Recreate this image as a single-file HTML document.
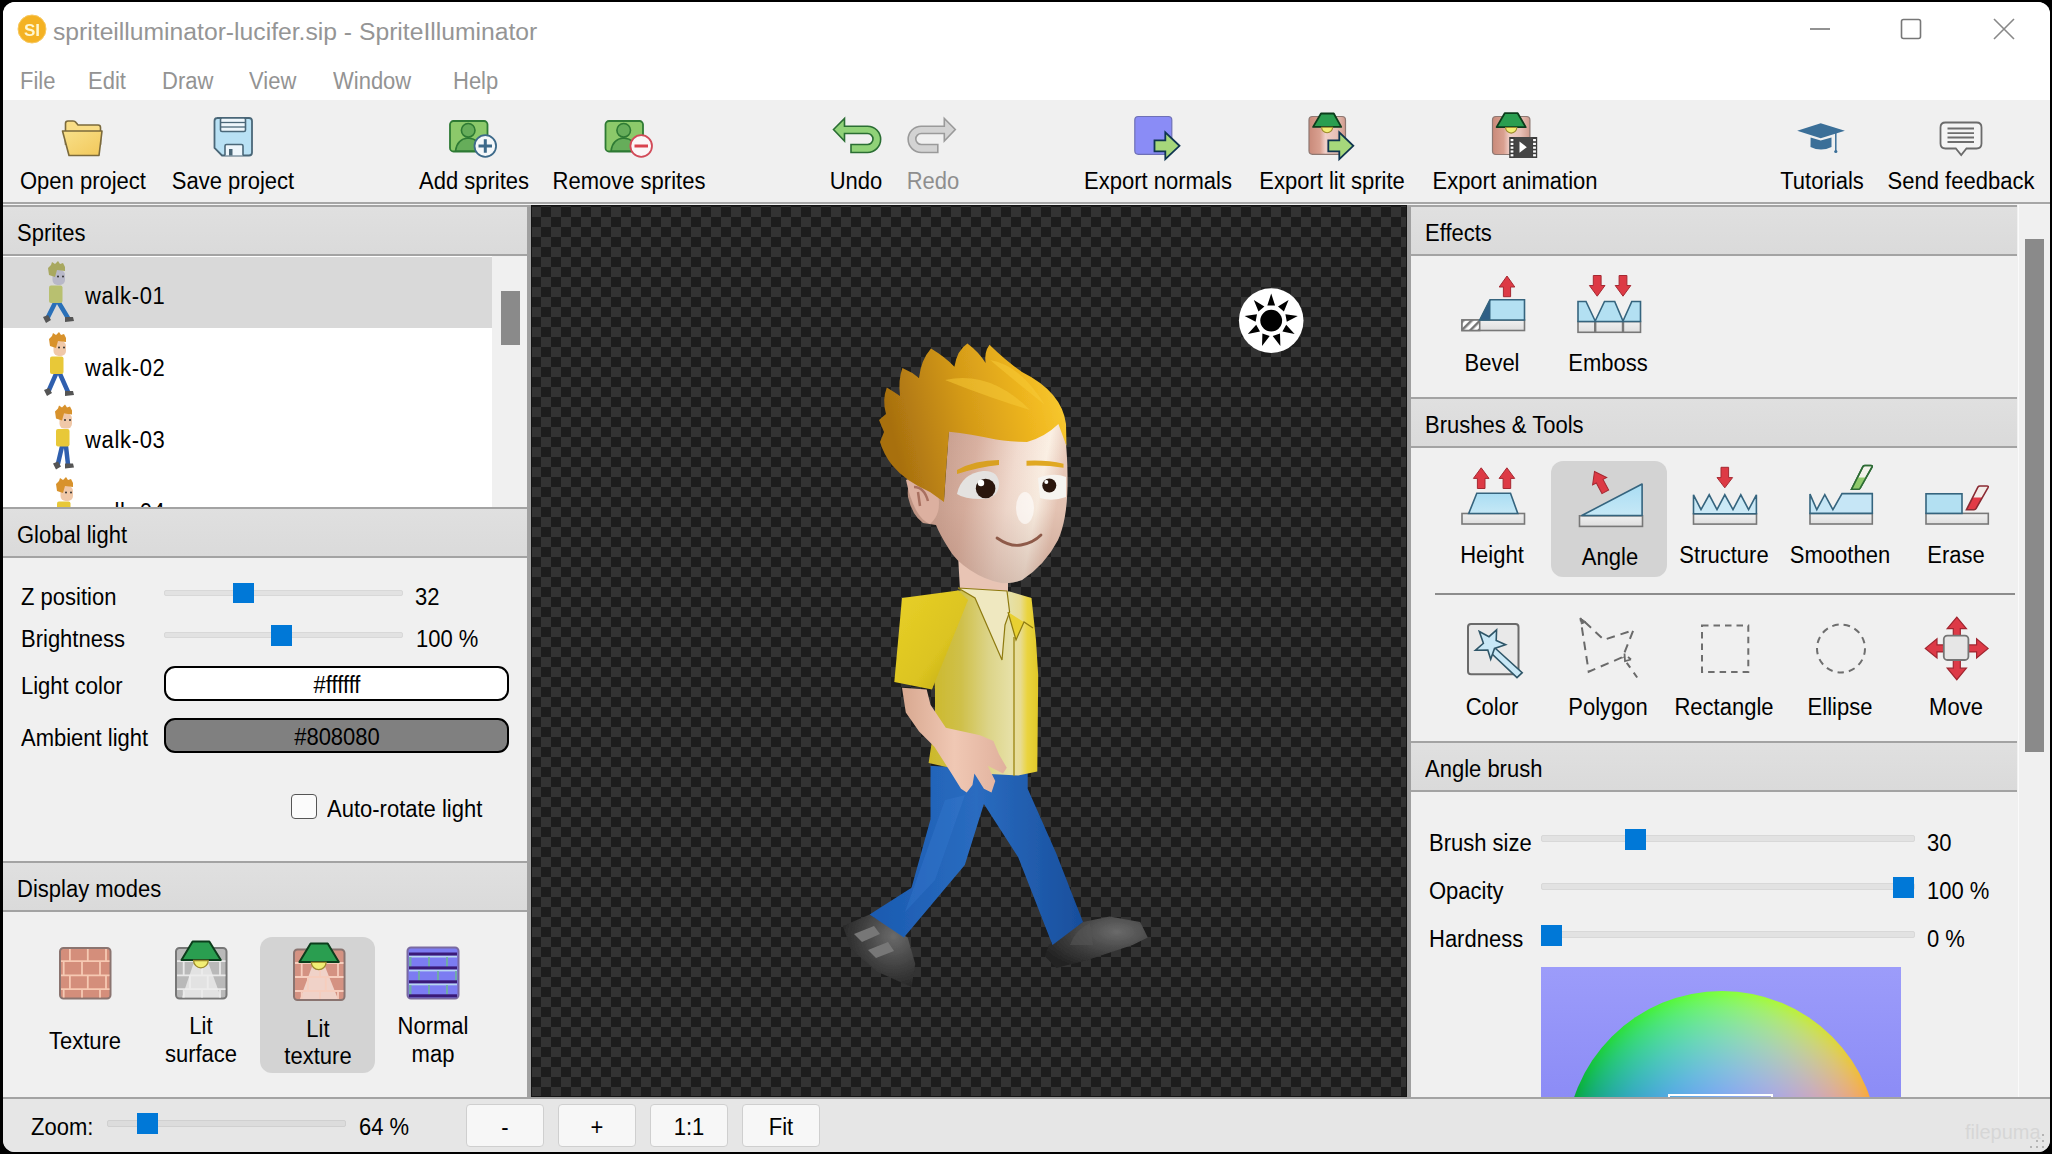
<!DOCTYPE html>
<html><head><meta charset="utf-8"><style>
html,body{margin:0;padding:0;}
body{width:2052px;height:1154px;overflow:hidden;background:#000;position:relative;font-family:'Liberation Sans',sans-serif;}
.t{position:absolute;white-space:nowrap;font-family:'Liberation Sans',sans-serif;}
.r{position:absolute;}
svg{position:absolute;}
</style></head><body>
<div class="r" style="left:3px;top:2px;width:2047px;height:1150px;background:#f0f0f0;border-radius:12px;overflow:hidden"><div class="r" style="left:0px;top:0px;width:2047px;height:98px;background:#ffffff"></div></div><div class="t" style="left:53px;top:20.09px;font-size:24.7px;line-height:24.7px;color:#959595;transform-origin:0 0;">spriteilluminator-lucifer.sip - SpriteIlluminator</div><div class="t" style="left:20px;top:69.53px;font-size:23.0px;line-height:23.0px;color:#939393;transform:scaleX(0.9565);transform-origin:0 0;">File</div><div class="t" style="left:88px;top:69.53px;font-size:23.0px;line-height:23.0px;color:#939393;transform:scaleX(0.9565);transform-origin:0 0;">Edit</div><div class="t" style="left:162px;top:69.53px;font-size:23.0px;line-height:23.0px;color:#939393;transform:scaleX(0.9565);transform-origin:0 0;">Draw</div><div class="t" style="left:249px;top:69.53px;font-size:23.0px;line-height:23.0px;color:#939393;transform:scaleX(0.9565);transform-origin:0 0;">View</div><div class="t" style="left:333px;top:69.53px;font-size:23.0px;line-height:23.0px;color:#939393;transform:scaleX(0.9565);transform-origin:0 0;">Window</div><div class="t" style="left:453px;top:69.53px;font-size:23.0px;line-height:23.0px;color:#939393;transform:scaleX(0.9565);transform-origin:0 0;">Help</div><div class="r" style="left:3px;top:101px;width:2047px;height:101px;background:#f0f0f0"></div><div class="r" style="left:3px;top:202px;width:2047px;height:2px;background:#a6a6a6"></div><div class="r" style="left:3px;top:204px;width:2047px;height:1px;background:#f4f4f4"></div><div class="t" style="left:-217px;width:600px;text-align:center;top:169.53px;font-size:23.0px;line-height:23.0px;color:#000;transform:scaleX(0.9565);transform-origin:50% 0;">Open project</div><div class="t" style="left:-67px;width:600px;text-align:center;top:169.53px;font-size:23.0px;line-height:23.0px;color:#000;transform:scaleX(0.9565);transform-origin:50% 0;">Save project</div><div class="t" style="left:174px;width:600px;text-align:center;top:169.53px;font-size:23.0px;line-height:23.0px;color:#000;transform:scaleX(0.9565);transform-origin:50% 0;">Add sprites</div><div class="t" style="left:329px;width:600px;text-align:center;top:169.53px;font-size:23.0px;line-height:23.0px;color:#000;transform:scaleX(0.9565);transform-origin:50% 0;">Remove sprites</div><div class="t" style="left:556px;width:600px;text-align:center;top:169.53px;font-size:23.0px;line-height:23.0px;color:#000;transform:scaleX(0.9565);transform-origin:50% 0;">Undo</div><div class="t" style="left:633px;width:600px;text-align:center;top:169.53px;font-size:23.0px;line-height:23.0px;color:#8e8e8e;transform:scaleX(0.9565);transform-origin:50% 0;">Redo</div><div class="t" style="left:858px;width:600px;text-align:center;top:169.53px;font-size:23.0px;line-height:23.0px;color:#000;transform:scaleX(0.9565);transform-origin:50% 0;">Export normals</div><div class="t" style="left:1032px;width:600px;text-align:center;top:169.53px;font-size:23.0px;line-height:23.0px;color:#000;transform:scaleX(0.9565);transform-origin:50% 0;">Export lit sprite</div><div class="t" style="left:1215px;width:600px;text-align:center;top:169.53px;font-size:23.0px;line-height:23.0px;color:#000;transform:scaleX(0.9565);transform-origin:50% 0;">Export animation</div><div class="t" style="left:1522px;width:600px;text-align:center;top:169.53px;font-size:23.0px;line-height:23.0px;color:#000;transform:scaleX(0.9565);transform-origin:50% 0;">Tutorials</div><div class="t" style="left:1661px;width:600px;text-align:center;top:169.53px;font-size:23.0px;line-height:23.0px;color:#000;transform:scaleX(0.9565);transform-origin:50% 0;">Send feedback</div><div class="r" style="left:3px;top:205px;width:524px;height:892px;background:#f0f0f0"></div><div class="r" style="left:3px;top:205px;width:524px;height:50px;background:linear-gradient(#e0e0e0,#dadada)"></div><div class="r" style="left:3px;top:205px;width:524px;height:2px;background:#a3a3a3"></div><div class="r" style="left:3px;top:254px;width:524px;height:2px;background:#a3a3a3"></div><div class="t" style="left:17px;top:221.53px;font-size:23.0px;line-height:23.0px;color:#000;transform:scaleX(0.9565);transform-origin:0 0;">Sprites</div><div class="r" style="left:3px;top:256px;width:524px;height:251px;background:#ffffff"></div><div class="r" style="left:3px;top:257px;width:489px;height:71px;background:#d9d9d9"></div><div class="r" style="left:492px;top:256px;width:35px;height:251px;background:#f0f0f0"></div><div class="r" style="left:501px;top:291px;width:19px;height:54px;background:#8a8a8a"></div><div class="r" style="left:3px;top:256px;width:489px;height:251px;overflow:hidden"><div class="t" style="left:82px;top:28.53px;font-size:23.0px;line-height:23.0px;color:#000;transform:scaleX(0.9565);transform-origin:0 0;letter-spacing:0.7px">walk-01</div><div class="t" style="left:82px;top:100.53px;font-size:23.0px;line-height:23.0px;color:#000;transform:scaleX(0.9565);transform-origin:0 0;letter-spacing:0.7px">walk-02</div><div class="t" style="left:82px;top:172.53px;font-size:23.0px;line-height:23.0px;color:#000;transform:scaleX(0.9565);transform-origin:0 0;letter-spacing:0.7px">walk-03</div><div class="t" style="left:82px;top:244.53px;font-size:23.0px;line-height:23.0px;color:#000;transform:scaleX(0.9565);transform-origin:0 0;letter-spacing:0.7px">walk-04</div></div><div class="r" style="left:3px;top:507px;width:524px;height:50px;background:linear-gradient(#e0e0e0,#dadada)"></div><div class="r" style="left:3px;top:507px;width:524px;height:2px;background:#a3a3a3"></div><div class="r" style="left:3px;top:556px;width:524px;height:2px;background:#a3a3a3"></div><div class="t" style="left:17px;top:523.53px;font-size:23.0px;line-height:23.0px;color:#000;transform:scaleX(0.9565);transform-origin:0 0;">Global light</div><div class="t" style="left:21px;top:585.53px;font-size:23.0px;line-height:23.0px;color:#000;transform:scaleX(0.9565);transform-origin:0 0;">Z position</div><div class="t" style="left:21px;top:627.53px;font-size:23.0px;line-height:23.0px;color:#000;transform:scaleX(0.9565);transform-origin:0 0;">Brightness</div><div class="t" style="left:21px;top:674.53px;font-size:23.0px;line-height:23.0px;color:#000;transform:scaleX(0.9565);transform-origin:0 0;">Light color</div><div class="t" style="left:21px;top:726.53px;font-size:23.0px;line-height:23.0px;color:#000;transform:scaleX(0.9565);transform-origin:0 0;">Ambient light</div><div class="r" style="left:164px;top:590px;width:239px;height:6px;background:#e2e2e2;border:1px solid #d8d8d8;box-sizing:border-box;border-radius:2px"></div><div class="r" style="left:233px;top:583px;width:21px;height:20px;background:#0078d7"></div><div class="t" style="left:415px;top:585.53px;font-size:23.0px;line-height:23.0px;color:#000;transform:scaleX(0.9565);transform-origin:0 0;">32</div><div class="r" style="left:164px;top:632px;width:239px;height:6px;background:#e2e2e2;border:1px solid #d8d8d8;box-sizing:border-box;border-radius:2px"></div><div class="r" style="left:271px;top:625px;width:21px;height:21px;background:#0078d7"></div><div class="t" style="left:416px;top:627.53px;font-size:23.0px;line-height:23.0px;color:#000;transform:scaleX(0.9565);transform-origin:0 0;">100 %</div><div class="r" style="left:164px;top:666px;width:345px;height:35px;background:#ffffff;border:2px solid #000;box-sizing:border-box;border-radius:11px"></div><div class="t" style="left:37px;width:600px;text-align:center;top:673.53px;font-size:23.0px;line-height:23.0px;color:#000;transform:scaleX(0.9565);transform-origin:50% 0;">#ffffff</div><div class="r" style="left:164px;top:718px;width:345px;height:35px;background:#808080;border:2px solid #000;box-sizing:border-box;border-radius:11px"></div><div class="t" style="left:37px;width:600px;text-align:center;top:725.53px;font-size:23.0px;line-height:23.0px;color:#000;transform:scaleX(0.9565);transform-origin:50% 0;">#808080</div><div class="r" style="left:291px;top:794px;width:26px;height:25px;background:#fbfbfb;border:1.5px solid #555;box-sizing:border-box;border-radius:4px"></div><div class="t" style="left:327px;top:797.53px;font-size:23.0px;line-height:23.0px;color:#000;transform:scaleX(0.9565);transform-origin:0 0;">Auto-rotate light</div><div class="r" style="left:3px;top:861px;width:524px;height:50px;background:linear-gradient(#e0e0e0,#dadada)"></div><div class="r" style="left:3px;top:861px;width:524px;height:2px;background:#a3a3a3"></div><div class="r" style="left:3px;top:910px;width:524px;height:2px;background:#a3a3a3"></div><div class="t" style="left:17px;top:877.53px;font-size:23.0px;line-height:23.0px;color:#000;transform:scaleX(0.9565);transform-origin:0 0;">Display modes</div><div class="r" style="left:260px;top:937px;width:115px;height:136px;background:#d3d3d3;border-radius:12px"></div><div class="t" style="left:-215px;width:600px;text-align:center;top:1029.53px;font-size:23.0px;line-height:23.0px;color:#000;transform:scaleX(0.9565);transform-origin:50% 0;">Texture</div><div class="t" style="left:-99px;width:600px;text-align:center;top:1014.53px;font-size:23.0px;line-height:23.0px;color:#000;transform:scaleX(0.9565);transform-origin:50% 0;">Lit</div><div class="t" style="left:-99px;width:600px;text-align:center;top:1042.53px;font-size:23.0px;line-height:23.0px;color:#000;transform:scaleX(0.9565);transform-origin:50% 0;">surface</div><div class="t" style="left:18px;width:600px;text-align:center;top:1017.53px;font-size:23.0px;line-height:23.0px;color:#000;transform:scaleX(0.9565);transform-origin:50% 0;">Lit</div><div class="t" style="left:18px;width:600px;text-align:center;top:1044.53px;font-size:23.0px;line-height:23.0px;color:#000;transform:scaleX(0.9565);transform-origin:50% 0;">texture</div><div class="t" style="left:133px;width:600px;text-align:center;top:1014.53px;font-size:23.0px;line-height:23.0px;color:#000;transform:scaleX(0.9565);transform-origin:50% 0;">Normal</div><div class="t" style="left:133px;width:600px;text-align:center;top:1042.53px;font-size:23.0px;line-height:23.0px;color:#000;transform:scaleX(0.9565);transform-origin:50% 0;">map</div><div class="r" style="left:527px;top:205px;width:4px;height:892px;background:#a0a0a0"></div><div class="r" style="left:1407px;top:205px;width:4px;height:892px;background:#a0a0a0"></div><div class="r" style="left:531px;top:205px;width:876px;height:892px;background-color:#232323;background-image:conic-gradient(#333333 25%, #1d1d1d 25% 50%, #333333 50% 75%, #1d1d1d 75%);background-size:20px 20px;background-position:0 12px;box-shadow:inset 0 0 0 1px #141414"></div><svg width="2052" height="1154" viewBox="0 0 2052 1154" style="left:0;top:0">
<defs>
<linearGradient id="hairG" x1="0" y1="0" x2="1" y2="0.4"><stop offset="0" stop-color="#c98a10"/><stop offset="0.35" stop-color="#e0a818"/><stop offset="0.7" stop-color="#f2c020"/><stop offset="1" stop-color="#f7d040"/></linearGradient>
<linearGradient id="skinG" x1="0" y1="0" x2="1" y2="0"><stop offset="0" stop-color="#c89a88"/><stop offset="0.35" stop-color="#e6c0b0"/><stop offset="0.75" stop-color="#f6e2d8"/><stop offset="1" stop-color="#e0b8a8"/></linearGradient>
<linearGradient id="skinV" x1="0" y1="0" x2="0" y2="1"><stop offset="0" stop-color="#f4dccc"/><stop offset="1" stop-color="#d6a898"/></linearGradient>
<linearGradient id="shirtG" x1="0" y1="0" x2="1" y2="0"><stop offset="0" stop-color="#d8c028"/><stop offset="0.2" stop-color="#e6d040"/><stop offset="0.55" stop-color="#e8e0a0"/><stop offset="0.85" stop-color="#efe8b0"/><stop offset="1" stop-color="#e8d040"/></linearGradient>
<linearGradient id="sleeveG" x1="0" y1="0" x2="1" y2="1"><stop offset="0" stop-color="#f0d830"/><stop offset="1" stop-color="#c8b020"/></linearGradient>
<linearGradient id="pantsG" x1="0" y1="0" x2="1" y2="0"><stop offset="0" stop-color="#1c58a8"/><stop offset="0.5" stop-color="#2c6cc0"/><stop offset="1" stop-color="#1a4c98"/></linearGradient>
<linearGradient id="shoeG" x1="0" y1="0" x2="1" y2="0"><stop offset="0" stop-color="#2a2a2a"/><stop offset="0.6" stop-color="#484848"/><stop offset="1" stop-color="#6a6a6a"/></linearGradient>
</defs>
<defs><filter id="soft" x="-5%" y="-5%" width="110%" height="110%"><feGaussianBlur stdDeviation="0.7"/></filter><linearGradient id="faceG" x1="0" y1="0" x2="1" y2="0.2"><stop offset="0" stop-color="#b58a7a"/><stop offset="0.45" stop-color="#d8b0a0"/><stop offset="0.7" stop-color="#f2dcd0"/><stop offset="0.88" stop-color="#fbf0e4"/><stop offset="1" stop-color="#e8c8b8"/></linearGradient><linearGradient id="hairG2" x1="0" y1="0.2" x2="1" y2="0"><stop offset="0" stop-color="#a87010"/><stop offset="0.4" stop-color="#d49a18"/><stop offset="0.75" stop-color="#f0b820"/><stop offset="1" stop-color="#fad038"/></linearGradient><linearGradient id="bodyG" x1="0" y1="0" x2="1" y2="0"><stop offset="0" stop-color="#ccb828"/><stop offset="0.3" stop-color="#cfc04a"/><stop offset="0.55" stop-color="#dcd488"/><stop offset="0.75" stop-color="#e6e0a6"/><stop offset="0.84" stop-color="#e8dc90"/><stop offset="0.9" stop-color="#ead440"/><stop offset="1" stop-color="#e0c828"/></linearGradient><linearGradient id="slvG" x1="0" y1="0" x2="1" y2="1"><stop offset="0" stop-color="#e8d028"/><stop offset="0.6" stop-color="#dcc420"/><stop offset="1" stop-color="#b8a418"/></linearGradient><linearGradient id="armG" x1="0" y1="0" x2="1" y2="0"><stop offset="0" stop-color="#d8a890"/><stop offset="0.5" stop-color="#f0c8b4"/><stop offset="1" stop-color="#e0b09c"/></linearGradient><linearGradient id="pantG2" x1="0" y1="0" x2="1" y2="0"><stop offset="0" stop-color="#1a5ab0"/><stop offset="0.5" stop-color="#2a6cc0"/><stop offset="1" stop-color="#184e9c"/></linearGradient><linearGradient id="faceShade" x1="0" y1="0" x2="0" y2="1"><stop offset="0" stop-color="#fff" stop-opacity="0"/><stop offset="0.55" stop-color="#8a5a48" stop-opacity="0.05"/><stop offset="1" stop-color="#8a5a48" stop-opacity="0.3"/></linearGradient><radialGradient id="shoeR" cx="0.7" cy="0.3" r="0.8"><stop offset="0" stop-color="#6a6a6a"/><stop offset="0.6" stop-color="#3c3c3c"/><stop offset="1" stop-color="#222"/></radialGradient></defs>
<g filter="url(#soft)">
<path d="M842.9 925.9 L869.6 914.5 L907.7 937.4 L915.3 964.0 L911.5 987.0 L877.2 971.7 L850.5 948.8 Z" fill="url(#shoeR)"/>
<path d="M1048.7 945.0 L1083.0 922.1 L1109.7 916.4 L1140.2 922.1 L1147.8 937.4 L1132.6 945.0 L1086.8 960.2 L1056.3 967.9 L1044.9 956.4 Z" fill="url(#shoeR)"/>
<path d="M854 934 L874 926 L880 934 L862 942 Z M868 950 L888 942 L894 951 L876 958 Z" fill="#777"/>
<path d="M1070 945 q5-15 20-22 l3 22 Z" fill="#555" opacity="0.6"/>
<path d="M930.5 765.8 L1027.7 772.0 L1027.7 788.7 L1056.3 853.5 L1083.0 922.1 L1052.5 945.0 L1018.2 857.3 L983.9 804.0 L964.8 865.0 L903.9 937.4 L869.6 914.5 L911.5 887.8 L930.5 819.2 Z" fill="url(#pantG2)"/>
<path d="M945 800 L965 795 L935 880 L905 912 Z" fill="#3a7cd0" opacity="0.35"/>
<path d="M958.0 555.0 L960.0 590.0 L979.7 598.3 L1006.7 611.8 L1008.0 591.5 L1008.0 575.0 L1030.0 570.0 Z" fill="#e8c4b4"/>
<path d="M928.0 600.0 L958.1 590.5 L1009.6 591.4 L1031.5 598.0 L1036.0 640.0 L1038.2 675.3 L1037.3 771.5 L1018.2 775.4 L990.0 774.0 L960.0 770.0 L928.6 763.0 L935.0 720.0 L935.0 689.6 Z" fill="url(#bodyG)"/>
<path d="M958.1 588.0 L975.0 598.0 L1002.0 660.0 L1005.0 625.0 L1009.6 612.0 L1007.0 591.0 Z" fill="#efe8c0" stroke="#8e7a10" stroke-width="1.2"/>
<path d="M1008 612 L1016 640 L1024 622 L1033 628" fill="#e8d030" stroke="#8e7a10" stroke-width="1.2"/>
<path d="M1014 637 V776" stroke="#9a8410" stroke-width="1.3"/>
<path d="M902.0 598.0 L958.1 590.5 L968.0 600.0 L948.0 650.0 L932.0 689.6 L894.3 682.0 Z" fill="url(#slvG)"/>
<path d="M902.0 687.7 L905.8 712.5 L919.1 731.5 L934.4 746.8 L951.5 773.5 L961.0 788.7 L966.7 792.5 L972.5 785.0 L974.4 773.5 L983.9 788.7 L991.5 792.5 L995.3 781.0 L987.7 765.8 L1003.0 773.5 L1006.8 767.7 L999.1 754.4 L993.4 741.0 L980.1 735.3 L945.8 727.7 L930.5 704.8 L926.7 689.6 Z" fill="url(#armG)"/>
<path d="M949 428 L1062 418 Q1068 445 1067.5 486 Q1067 520 1058 540 Q1045 565 1022 580 Q1010 584 1001 583 Q985 580 970 570 Q955 560 949 549 Q940 535 936 525 L923 523 Q912 515 908 497 Q906 480 918 477 Q930 478 944 500 Z" fill="url(#faceG)"/><path d="M949 428 L1062 418 Q1068 445 1067.5 486 Q1067 520 1058 540 Q1045 565 1022 580 Q1010 584 1001 583 Q985 580 970 570 Q955 560 949 549 Q940 535 936 525 L923 523 Q912 515 908 497 Q906 480 918 477 Q930 478 944 500 Z" fill="url(#faceShade)"/>
<path d="M906 480 q16 -8 32 14 q4 20 -8 30 q-16 -6 -24 -44 Z" fill="#dcb0a0"/><path d="M914 487 q10 0 14 14 M918 492 l2 14" stroke="#a87060" stroke-width="2.5" fill="none"/>
<path d="M944 502 L930 492 Q905 481 892 465 Q884 455 880 442 L884 432 L879 420 L886 414 Q882 400 886.8 387.6 Q894 392 900 396 Q898 380 902.4 368 Q912 372 919 378 Q921 360 931 348.6 Q945 357 954.4 366.8 Q957 350 967.4 343.4 Q979 352 985.6 363 Q984 352 989.5 344.7 Q1005 360 1022 372 Q1042 382 1053 395 Q1064 408 1066 424 L1066.5 446 L1058.4 424 Q1045 437 1027 442 Q1010 442 996 439.6 Q970 434 949 431.8 L946 470 Z" fill="url(#hairG2)"/>
<path d="M945 380 q45 -10 85 30 q-40 -12 -85 -30 Z M990 360 q30 5 55 45 q-25 -20 -55 -45 Z" fill="#f8cc38" opacity="0.5"/>
<path d="M957 470 q18 -10 42 -10 l0 5 q-20 2 -42 9 Z" fill="#d8a020"/>
<path d="M1026.5 460.7 q20 -1 37 3 l0 4 q-18 -3 -37 -2 Z" fill="#e0a820"/>
<path d="M957 494 q4 -20 26 -23 q16 -1 16 14 q-1 14 -18 14 q-17 0 -24 -5 Z" fill="#e4e2e0"/>
<circle cx="985.6" cy="488.5" r="9.8" fill="#2a1810"/><circle cx="981" cy="483" r="3.2" fill="#fff"/>
<path d="M1038 478 q16 -6 28 -1 l0 20 q-14 5 -26 1 Z" fill="#f6f4f0"/>
<circle cx="1049.3" cy="485.5" r="7" fill="#2a1810"/><circle cx="1046.3" cy="482" r="2" fill="#fff"/>
<ellipse cx="1025" cy="508" rx="9" ry="16" fill="#ffffff" opacity="0.6"/>
<path d="M997 538 q13 9 24 7 q12 -2 20 -10" stroke="#8e5a48" stroke-width="2.8" fill="none" stroke-linecap="round"/>
</g>
<circle cx="1271.2" cy="320.6" r="32.3" fill="#fff"/>
<circle cx="1271.2" cy="320.6" r="10.9" fill="#000"/>
<path d="M1271.2 293.6 L1275.1 305.5 L1267.3 305.5 Z M1288.6 299.9 L1283.9 311.5 L1278.0 306.5 Z M1297.8 315.9 L1286.8 321.8 L1285.4 314.2 Z M1294.6 334.1 L1282.4 331.5 L1286.2 324.8 Z M1280.4 346.0 L1272.7 336.1 L1280.0 333.5 Z M1262.0 346.0 L1262.4 333.5 L1269.7 336.1 Z M1247.8 334.1 L1256.2 324.8 L1260.0 331.5 Z M1244.6 315.9 L1257.0 314.2 L1255.6 321.8 Z M1253.8 299.9 L1264.4 306.5 L1258.5 311.5 Z" fill="#000"/>
<svg x="3" y="256" width="489" height="251" viewBox="3 256 489 251" overflow="hidden">
<g transform="translate(45,262)"><path d="M10 41 L3 55 M14 41 L23 56" stroke="#2a70b8" stroke-width="4.5" fill="none" stroke-linecap="round"/><path d="M-2 55 l5 -2 l3 5 l-5 3 Z M20 55 h8 l1 4 l-9 1 Z" fill="#555"/><rect x="4" y="23.5" width="13.5" height="17.5" rx="2" fill="#b8c070"/><rect x="7.5" y="8" width="12.5" height="15" rx="5" fill="#b8b8c8"/><path d="M4 13 L3 6 L6 3 L7 0 L10 2 L13 -1 L15 2 L18 1 L20 5 L20 9 L12 8 L10 15 Z" fill="#a8a860"/><circle cx="13" cy="14.5" r="1" fill="#333"/><circle cx="18" cy="14.5" r="1" fill="#333"/></g>
<g transform="translate(46,333)"><path d="M10 41 L3 57 M14 41 L22 59" stroke="#2f5fae" stroke-width="4.5" fill="none" stroke-linecap="round"/><path d="M-2 57 l5 -2 l3 5 l-5 3 Z M19 58 h8 l1 4 l-9 1 Z" fill="#555"/><rect x="4" y="23.5" width="13.5" height="17.5" rx="2" fill="#e8c838"/><rect x="7.5" y="8" width="12.5" height="15" rx="5" fill="#f0c8a8"/><path d="M4 13 L3 6 L6 3 L7 0 L10 2 L13 -1 L15 2 L18 1 L20 5 L20 9 L12 8 L10 15 Z" fill="#d8922c"/><circle cx="13" cy="14.5" r="1" fill="#333"/><circle cx="18" cy="14.5" r="1" fill="#333"/></g>
<g transform="translate(52,405.6)"><path d="M10 41 L6 58 M14 41 L16 59" stroke="#2f5fae" stroke-width="4.5" fill="none" stroke-linecap="round"/><path d="M1 58 l5 -2 l3 5 l-5 3 Z M13 58 h8 l1 4 l-9 1 Z" fill="#555"/><rect x="4" y="23.5" width="13.5" height="17.5" rx="2" fill="#e8c838"/><rect x="7.5" y="8" width="12.5" height="15" rx="5" fill="#f0c8a8"/><path d="M4 13 L3 6 L6 3 L7 0 L10 2 L13 -1 L15 2 L18 1 L20 5 L20 9 L12 8 L10 15 Z" fill="#d8922c"/><circle cx="13" cy="14.5" r="1" fill="#333"/><circle cx="18" cy="14.5" r="1" fill="#333"/></g>
<g transform="translate(53,478)"><path d="M10 41 L6 58 M14 41 L16 59" stroke="#2f5fae" stroke-width="4.5" fill="none" stroke-linecap="round"/><path d="M1 58 l5 -2 l3 5 l-5 3 Z M13 58 h8 l1 4 l-9 1 Z" fill="#555"/><rect x="4" y="23.5" width="13.5" height="17.5" rx="2" fill="#e8c838"/><rect x="7.5" y="8" width="12.5" height="15" rx="5" fill="#f0c8a8"/><path d="M4 13 L3 6 L6 3 L7 0 L10 2 L13 -1 L15 2 L18 1 L20 5 L20 9 L12 8 L10 15 Z" fill="#d8922c"/><circle cx="13" cy="14.5" r="1" fill="#333"/><circle cx="18" cy="14.5" r="1" fill="#333"/></g>
</svg><div class="r" style="left:1411px;top:205px;width:639px;height:892px;background:#f0f0f0"></div><div class="r" style="left:1411px;top:205px;width:606px;height:50px;background:linear-gradient(#e0e0e0,#dadada)"></div><div class="r" style="left:1411px;top:205px;width:606px;height:2px;background:#a3a3a3"></div><div class="r" style="left:1411px;top:254px;width:606px;height:2px;background:#a3a3a3"></div><div class="t" style="left:1425px;top:221.53px;font-size:23.0px;line-height:23.0px;color:#000;transform:scaleX(0.9565);transform-origin:0 0;">Effects</div><div class="t" style="left:1192px;width:600px;text-align:center;top:351.53px;font-size:23.0px;line-height:23.0px;color:#000;transform:scaleX(0.9565);transform-origin:50% 0;">Bevel</div><div class="t" style="left:1308px;width:600px;text-align:center;top:351.53px;font-size:23.0px;line-height:23.0px;color:#000;transform:scaleX(0.9565);transform-origin:50% 0;">Emboss</div><div class="r" style="left:1411px;top:397px;width:606px;height:50px;background:linear-gradient(#e0e0e0,#dadada)"></div><div class="r" style="left:1411px;top:397px;width:606px;height:2px;background:#a3a3a3"></div><div class="r" style="left:1411px;top:446px;width:606px;height:2px;background:#a3a3a3"></div><div class="t" style="left:1425px;top:413.53px;font-size:23.0px;line-height:23.0px;color:#000;transform:scaleX(0.9565);transform-origin:0 0;">Brushes &amp; Tools</div><div class="r" style="left:1551px;top:461px;width:116px;height:116px;background:#d3d3d3;border-radius:12px"></div><div class="t" style="left:1192px;width:600px;text-align:center;top:543.53px;font-size:23.0px;line-height:23.0px;color:#000;transform:scaleX(0.9565);transform-origin:50% 0;">Height</div><div class="t" style="left:1310px;width:600px;text-align:center;top:545.53px;font-size:23.0px;line-height:23.0px;color:#000;transform:scaleX(0.9565);transform-origin:50% 0;">Angle</div><div class="t" style="left:1424px;width:600px;text-align:center;top:543.53px;font-size:23.0px;line-height:23.0px;color:#000;transform:scaleX(0.9565);transform-origin:50% 0;">Structure</div><div class="t" style="left:1540px;width:600px;text-align:center;top:543.53px;font-size:23.0px;line-height:23.0px;color:#000;transform:scaleX(0.9565);transform-origin:50% 0;">Smoothen</div><div class="t" style="left:1656px;width:600px;text-align:center;top:543.53px;font-size:23.0px;line-height:23.0px;color:#000;transform:scaleX(0.9565);transform-origin:50% 0;">Erase</div><div class="r" style="left:1435px;top:593px;width:580px;height:2px;background:#8c8c8c"></div><div class="t" style="left:1192px;width:600px;text-align:center;top:695.53px;font-size:23.0px;line-height:23.0px;color:#000;transform:scaleX(0.9565);transform-origin:50% 0;">Color</div><div class="t" style="left:1308px;width:600px;text-align:center;top:695.53px;font-size:23.0px;line-height:23.0px;color:#000;transform:scaleX(0.9565);transform-origin:50% 0;">Polygon</div><div class="t" style="left:1424px;width:600px;text-align:center;top:695.53px;font-size:23.0px;line-height:23.0px;color:#000;transform:scaleX(0.9565);transform-origin:50% 0;">Rectangle</div><div class="t" style="left:1540px;width:600px;text-align:center;top:695.53px;font-size:23.0px;line-height:23.0px;color:#000;transform:scaleX(0.9565);transform-origin:50% 0;">Ellipse</div><div class="t" style="left:1656px;width:600px;text-align:center;top:695.53px;font-size:23.0px;line-height:23.0px;color:#000;transform:scaleX(0.9565);transform-origin:50% 0;">Move</div><div class="r" style="left:1411px;top:741px;width:606px;height:50px;background:linear-gradient(#e0e0e0,#dadada)"></div><div class="r" style="left:1411px;top:741px;width:606px;height:2px;background:#a3a3a3"></div><div class="r" style="left:1411px;top:790px;width:606px;height:2px;background:#a3a3a3"></div><div class="t" style="left:1425px;top:757.53px;font-size:23.0px;line-height:23.0px;color:#000;transform:scaleX(0.9565);transform-origin:0 0;">Angle brush</div><div class="t" style="left:1429px;top:831.53px;font-size:23.0px;line-height:23.0px;color:#000;transform:scaleX(0.9565);transform-origin:0 0;">Brush size</div><div class="t" style="left:1429px;top:879.53px;font-size:23.0px;line-height:23.0px;color:#000;transform:scaleX(0.9565);transform-origin:0 0;">Opacity</div><div class="t" style="left:1429px;top:927.53px;font-size:23.0px;line-height:23.0px;color:#000;transform:scaleX(0.9565);transform-origin:0 0;">Hardness</div><div class="r" style="left:1541px;top:835px;width:374px;height:7px;background:#e2e2e2;border:1px solid #d8d8d8;box-sizing:border-box;border-radius:2px"></div><div class="r" style="left:1541px;top:883px;width:374px;height:7px;background:#e2e2e2;border:1px solid #d8d8d8;box-sizing:border-box;border-radius:2px"></div><div class="r" style="left:1541px;top:931px;width:374px;height:7px;background:#e2e2e2;border:1px solid #d8d8d8;box-sizing:border-box;border-radius:2px"></div><div class="r" style="left:1625px;top:829px;width:21px;height:21px;background:#0078d7"></div><div class="r" style="left:1893px;top:877px;width:21px;height:21px;background:#0078d7"></div><div class="r" style="left:1541px;top:925px;width:21px;height:21px;background:#0078d7"></div><div class="t" style="left:1927px;top:831.53px;font-size:23.0px;line-height:23.0px;color:#000;transform:scaleX(0.9565);transform-origin:0 0;">30</div><div class="t" style="left:1927px;top:879.53px;font-size:23.0px;line-height:23.0px;color:#000;transform:scaleX(0.9565);transform-origin:0 0;">100 %</div><div class="t" style="left:1927px;top:927.53px;font-size:23.0px;line-height:23.0px;color:#000;transform:scaleX(0.9565);transform-origin:0 0;">0 %</div><div class="r" style="left:1541px;top:967px;width:360px;height:130px;overflow:hidden;background:linear-gradient(#9c9cfa,#8c8cf6)">
<div class="r" style="left:24.7px;top:24.3px;width:312.6px;height:312.6px;border-radius:50%;
background:radial-gradient(circle closest-side, rgb(0,0,255) 0.0%,rgb(0,0,243) 30.0%,rgb(0,0,221) 50.0%,rgb(0,0,204) 60.0%,rgb(0,0,184) 70.0%,rgb(0,0,156) 80.0%,rgb(0,0,132) 86.6%,rgb(0,0,118) 90.0%,rgb(0,0,92) 95.0%,rgb(0,0,72) 98.0%,rgb(0,0,60) 100.0%), linear-gradient(to right, rgb(0,0,0), rgb(255,0,0)), linear-gradient(to bottom, rgb(0,255,0), rgb(0,0,0));background-blend-mode:screen"></div>
<div class="r" style="left:127px;top:126.5px;width:105px;height:10px;border:2px solid #fff;box-sizing:border-box"></div>
</div><div class="r" style="left:2017px;top:205px;width:33px;height:892px;background:#f0f0f0"></div><div class="r" style="left:2018px;top:205px;width:1px;height:892px;background:#fafafa"></div><div class="r" style="left:2025px;top:239px;width:19px;height:513px;background:#8a8a8a"></div><div class="r" style="left:3px;top:1097px;width:2047px;height:2px;background:#a3a3a3"></div><div class="r" style="left:3px;top:1099px;width:2047px;height:53px;background:#e6e6e6;border-radius:0 0 12px 12px"></div><div class="t" style="left:31px;top:1115.53px;font-size:23.0px;line-height:23.0px;color:#000;transform:scaleX(0.9565);transform-origin:0 0;">Zoom:</div><div class="r" style="left:107px;top:1120px;width:239px;height:7px;background:#dcdcdc;border:1px solid #d0d0d0;box-sizing:border-box;border-radius:2px"></div><div class="r" style="left:137px;top:1113px;width:21px;height:21px;background:#0078d7"></div><div class="t" style="left:359px;top:1115.53px;font-size:23.0px;line-height:23.0px;color:#000;transform:scaleX(0.9565);transform-origin:0 0;">64 %</div><div class="r" style="left:466px;top:1104px;width:78px;height:43px;background:#f7f7f7;border:1px solid #cfcfcf;box-sizing:border-box;border-radius:4px"></div><div class="t" style="left:205px;width:600px;text-align:center;top:1115.53px;font-size:23.0px;line-height:23.0px;color:#000;transform:scaleX(0.9565);transform-origin:50% 0;">-</div><div class="r" style="left:558px;top:1104px;width:78px;height:43px;background:#f7f7f7;border:1px solid #cfcfcf;box-sizing:border-box;border-radius:4px"></div><div class="t" style="left:297px;width:600px;text-align:center;top:1115.53px;font-size:23.0px;line-height:23.0px;color:#000;transform:scaleX(0.9565);transform-origin:50% 0;">+</div><div class="r" style="left:650px;top:1104px;width:78px;height:43px;background:#f7f7f7;border:1px solid #cfcfcf;box-sizing:border-box;border-radius:4px"></div><div class="t" style="left:389px;width:600px;text-align:center;top:1115.53px;font-size:23.0px;line-height:23.0px;color:#000;transform:scaleX(0.9565);transform-origin:50% 0;">1:1</div><div class="r" style="left:742px;top:1104px;width:78px;height:43px;background:#f7f7f7;border:1px solid #cfcfcf;box-sizing:border-box;border-radius:4px"></div><div class="t" style="left:481px;width:600px;text-align:center;top:1115.53px;font-size:23.0px;line-height:23.0px;color:#000;transform:scaleX(0.9565);transform-origin:50% 0;">Fit</div><div class="t" style="left:1965px;top:1122.3px;font-size:20.90909090909091px;line-height:20.90909090909091px;color:#d6d6d6;transform:scaleX(0.9565);transform-origin:0 0;">filepuma</div><div class="r" style="left:2042px;top:1134px;width:2px;height:2px;background:#b4b4b4"></div><div class="r" style="left:2036px;top:1140px;width:2px;height:2px;background:#b4b4b4"></div><div class="r" style="left:2042px;top:1140px;width:2px;height:2px;background:#b4b4b4"></div><div class="r" style="left:2030px;top:1146px;width:2px;height:2px;background:#b4b4b4"></div><div class="r" style="left:2036px;top:1146px;width:2px;height:2px;background:#b4b4b4"></div><div class="r" style="left:2042px;top:1146px;width:2px;height:2px;background:#b4b4b4"></div><svg width="2052" height="1154" viewBox="0 0 2052 1154" style="left:0;top:0">
<defs>
<linearGradient id="gFold" x1="0" y1="0" x2="1" y2="1"><stop offset="0" stop-color="#f8e08a"/><stop offset="1" stop-color="#f2c85a"/></linearGradient>
<linearGradient id="gBlue" x1="0" y1="0" x2="0" y2="1"><stop offset="0" stop-color="#a9ddf3"/><stop offset="1" stop-color="#c6e8f6"/></linearGradient>
<linearGradient id="gBase" x1="0" y1="0" x2="0" y2="1"><stop offset="0" stop-color="#f0f0f0"/><stop offset="1" stop-color="#dedede"/></linearGradient>
<linearGradient id="gRed" x1="0" y1="0" x2="1" y2="0"><stop offset="0" stop-color="#c92a36"/><stop offset="0.5" stop-color="#e8404a"/><stop offset="1" stop-color="#c92a36"/></linearGradient>
<pattern id="hatch" width="6" height="6" patternUnits="userSpaceOnUse" patternTransform="rotate(45)"><rect width="6" height="6" fill="#fff"/><rect width="2.5" height="6" fill="#777"/></pattern>
<linearGradient id="gBeam" x1="0" y1="0" x2="1" y2="0"><stop offset="0" stop-color="#c98a7a"/><stop offset="0.3" stop-color="#d9a090"/><stop offset="0.45" stop-color="#f0cfc8"/><stop offset="0.75" stop-color="#e8c0b6"/><stop offset="1" stop-color="#cf9a8c"/></linearGradient>
</defs>

<!-- ===== title icon ===== -->
<circle cx="32" cy="29" r="14" fill="#f4b223" stroke="#f7c860" stroke-width="1"/>
<text x="32" y="36" text-anchor="middle" font-family="Liberation Sans" font-weight="bold" font-size="17" fill="#fff7d0">SI</text>
<!-- window controls -->
<line x1="1810" y1="29" x2="1830" y2="29" stroke="#777" stroke-width="1.6"/>
<rect x="1901.5" y="19.5" width="19" height="19" rx="2" fill="none" stroke="#777" stroke-width="1.6"/>
<path d="M1994 19 L2014 39 M2014 19 L1994 39" stroke="#888" stroke-width="1.6"/>

<!-- ===== toolbar ===== -->
<!-- open folder -->
<path d="M65.5 144 V123.5 q0-2.5 2.5-2.5 h5 q2 0 3 1.5 l2 2.5 h20 q2.5 0 2.5 2.5 V144 Z" fill="#f9dd86" stroke="#7b6a3c" stroke-width="1.6"/>
<path d="M62.5 131 H102 L99 155.5 H69 Z" fill="url(#gFold)" stroke="#7b6a3c" stroke-width="1.6" stroke-linejoin="round"/>
<!-- save -->
<path d="M217 118 H249 q3 0 3 3 V152.5 q0 3 -3 3 H222 L214.5 148 V121 q0-3 3-3 Z" fill="#b9e1f4" stroke="#4a6778" stroke-width="1.8"/>
<rect x="220.5" y="118" width="25" height="13.5" rx="1.5" fill="#eef6fb" stroke="#4a6778" stroke-width="1.6"/>
<line x1="221" y1="122.5" x2="245" y2="122.5" stroke="#4a6778" stroke-width="1.3"/>
<line x1="221" y1="127" x2="245" y2="127" stroke="#4a6778" stroke-width="1.3"/>
<path d="M225 155.5 V146 q0-1.5 1.5-1.5 h15 q1.5 0 1.5 1.5 v9.5" fill="#eef6fb" stroke="#4a6778" stroke-width="1.6"/>
<rect x="229" y="149" width="3.5" height="6.5" fill="#4a6778"/>
<!-- add sprites -->
<g>
<rect x="450" y="121" width="37.5" height="30.5" rx="3.5" fill="#8cc96a" stroke="#2e7a34" stroke-width="1.8"/>
<path d="M455.5 151 q1.5-12 12.5-13 q12 1 13.5 13 Z" fill="#66ad5a" stroke="#2e7a34" stroke-width="1.6"/>
<circle cx="468.2" cy="130.3" r="6.8" fill="#66ad5a" stroke="#2e7a34" stroke-width="1.6"/>
<circle cx="485.3" cy="146" r="10.8" fill="#f5f8fa" stroke="#3d6a8a" stroke-width="1.8"/>
<path d="M478.5 146 H492 M485.3 139.2 V152.8" stroke="#3d6a8a" stroke-width="3"/>
</g>
<g>
<rect x="605.5" y="121" width="37.5" height="30.5" rx="3.5" fill="#8cc96a" stroke="#2e7a34" stroke-width="1.8"/>
<path d="M611 151 q1.5-12 12.5-13 q12 1 13.5 13 Z" fill="#66ad5a" stroke="#2e7a34" stroke-width="1.6"/>
<circle cx="623.7" cy="130.3" r="6.8" fill="#66ad5a" stroke="#2e7a34" stroke-width="1.6"/>
<circle cx="641.2" cy="146" r="10.8" fill="#fbf6f7" stroke="#d24a58" stroke-width="1.8"/>
<path d="M634.5 146 H648" stroke="#d9434e" stroke-width="3"/>
</g>
<!-- undo / redo -->
<path id="undoP" d="M833.5 129.5 L844.5 118.5 V126.2 H867.5 A13.15 13.15 0 0 1 867.5 152.5 H851 V144.5 H867.5 A5.5 5.5 0 0 0 867.5 133.5 H844.5 V141 Z" fill="#90d278" stroke="#2a6e33" stroke-width="1.6" stroke-linejoin="miter"/>
<g transform="translate(1788.8,0) scale(-1,1)"><path d="M833.5 129.5 L844.5 118.5 V126.2 H867.5 A13.15 13.15 0 0 1 867.5 152.5 H851 V144.5 H867.5 A5.5 5.5 0 0 0 867.5 133.5 H844.5 V141 Z" fill="#d3d3d3" stroke="#9a9a9a" stroke-width="1.6"/></g>
<!-- export normals -->
<rect x="1134.8" y="116.5" width="37" height="37.8" rx="3.5" fill="#8a8cf6" stroke="#6e70b6" stroke-width="1.2"/>
<path d="M1154.5 140.3 H1165.3 V132.4 L1179.5 145.8 L1165.3 159.2 V151.3 H1154.5 Z" fill="#a6d77b" stroke="#0f3550" stroke-width="1.8" stroke-linejoin="miter"/>
<!-- export lit sprite -->
<rect x="1309" y="116.5" width="36.5" height="37.8" rx="3.5" fill="url(#gBeam)" stroke="#8e7872" stroke-width="1.2"/>
<path d="M1321 113.5 H1333.8 L1341.2 126.9 H1313.1 Z" fill="#2a9e50" stroke="#0c3d1c" stroke-width="1.8" stroke-linejoin="round"/>
<path d="M1321.6 127.3 a5.5 5.5 0 0 0 11 0 Z" fill="#f2ee74" stroke="#9c8a2c" stroke-width="1.1"/>
<path d="M1328.3 140.3 H1339.3 V132.4 L1353.3 145.8 L1339.3 159.2 V151.3 H1328.3 Z" fill="#a6d77b" stroke="#0f3550" stroke-width="1.8"/>
<!-- export animation -->
<rect x="1492.5" y="116.5" width="37.4" height="38" rx="3.5" fill="url(#gBeam)" stroke="#8e7872" stroke-width="1.2"/>
<path d="M1504.7 113.2 H1517.7 L1525.7 127.1 H1496.6 Z" fill="#2a9e50" stroke="#0c3d1c" stroke-width="1.8" stroke-linejoin="round"/>
<path d="M1505.6 127.5 a5.6 5.6 0 0 0 11.2 0 Z" fill="#f2ee74" stroke="#9c8a2c" stroke-width="1.1"/>
<rect x="1509.2" y="137" width="28" height="21" fill="#3d3d3d"/>
<g fill="#ffffff"><rect x="1510.6" y="139" width="2.8" height="2.2"/><rect x="1510.6" y="142.8" width="2.8" height="2.2"/><rect x="1510.6" y="146.6" width="2.8" height="2.2"/><rect x="1510.6" y="150.4" width="2.8" height="2.2"/><rect x="1510.6" y="154.2" width="2.8" height="2.2"/>
<rect x="1533.1" y="139" width="2.8" height="2.2"/><rect x="1533.1" y="142.8" width="2.8" height="2.2"/><rect x="1533.1" y="146.6" width="2.8" height="2.2"/><rect x="1533.1" y="150.4" width="2.8" height="2.2"/><rect x="1533.1" y="154.2" width="2.8" height="2.2"/></g>
<rect x="1514.5" y="137" width="18" height="21" fill="#454545"/>
<path d="M1519.5 141.5 V152.8 L1526.8 147.2 Z" fill="#fff"/>
<!-- tutorials -->
<path d="M1797.2 130.7 L1820.7 123.2 L1844.9 130.7 L1820.7 138.2 Z" fill="#3b6f98"/>
<path d="M1810.6 137.5 L1820.7 140.5 L1831.5 137.5 V147 q-10.5 5-21 0 Z" fill="#3b6f98"/>
<line x1="1835.8" y1="132" x2="1835.8" y2="151" stroke="#3b6f98" stroke-width="1.5"/>
<circle cx="1835.8" cy="151.5" r="1.6" fill="#3b6f98"/>
<!-- feedback -->
<path d="M1945.5 122.5 H1976.5 q5 0 5 5 V143.5 q0 5 -5 5 H1966.5 L1961.2 155 L1955.8 148.5 H1945.5 q-5 0 -5-5 V127.5 q0-5 5-5 Z" fill="#f4f4f4" stroke="#6b6b6b" stroke-width="1.8"/>
<path d="M1947.5 128.5 H1974 M1947.5 133.2 H1974 M1947.5 137.5 H1974 M1947.5 142 H1974" stroke="#6e6e6e" stroke-width="1.8"/>

<!-- ===== effects ===== -->
<!-- bevel -->
<rect x="1462" y="320" width="62.5" height="10.5" fill="url(#gBase)" stroke="#787878" stroke-width="1.6"/>
<rect x="1462" y="320" width="17.7" height="10.5" fill="url(#hatch)" stroke="#787878" stroke-width="1.6"/>
<path d="M1479.7 320 L1490 299.8 H1524.5 V320 Z" fill="#b3e0f2" stroke="#35647e" stroke-width="1.6"/>
<path d="M1479.9 320 L1490 300 V320 Z" fill="#2f5f86" stroke="#35647e" stroke-width="1"/>
<path d="M1507 276 L1514.8 287 H1510.6 V296.7 H1503.4 V287 H1499.2 Z" fill="#dd3a45" stroke="#a52831" stroke-width="1"/>
<!-- emboss -->
<rect x="1578" y="321.5" width="62.5" height="10.8" fill="url(#gBase)" stroke="#787878" stroke-width="1.6"/>
<path d="M1595.2 321.5 V332.3 M1623 321.5 V332.3" stroke="#787878" stroke-width="2.4"/>
<path d="M1578 301.5 H1586 L1595.2 321 L1604.5 301.5 H1614.7 L1623 321 L1631.8 301.5 H1640.5 V321.5 H1578 Z" fill="#b3e0f2" stroke="#35647e" stroke-width="1.6" stroke-linejoin="miter"/>
<path d="M1597.2 296.2 L1605 285.5 H1601.1 V275.5 H1593.3 V285.5 H1589.4 Z" fill="#dd3a45" stroke="#a52831" stroke-width="1"/>
<path d="M1623 296.2 L1630.8 285.5 H1626.9 V275.5 H1619.1 V285.5 H1615.2 Z" fill="#dd3a45" stroke="#a52831" stroke-width="1"/>

<!-- ===== brushes row ===== -->
<!-- height -->
<rect x="1462" y="513.5" width="62.5" height="10.5" fill="url(#gBase)" stroke="#787878" stroke-width="1.6"/>
<path d="M1476.8 493.3 H1510.5 L1517.8 513.5 H1468.7 Z" fill="url(#gBlue)" stroke="#35647e" stroke-width="1.6"/>
<path d="M1481.2 467.8 L1489 478.4 H1485 V488.5 H1477.4 V478.4 H1473.4 Z" fill="#dd3a45" stroke="#a52831" stroke-width="1"/>
<path d="M1506.9 467.8 L1514.7 478.4 H1510.7 V488.5 H1503.1 V478.4 H1499.1 Z" fill="#dd3a45" stroke="#a52831" stroke-width="1"/>
<!-- angle -->
<rect x="1579.5" y="515.8" width="63" height="10.6" fill="url(#gBase)" stroke="#787878" stroke-width="1.6"/>
<path d="M1581.8 515.5 L1642.1 484 V515.5 Z" fill="url(#gBlue)" stroke="#35647e" stroke-width="1.6" stroke-linejoin="round"/>
<g transform="translate(1594.5,471.5) rotate(-28)"><path d="M0 0 L8 11 H3.8 V23 H-3.8 V11 H-8 Z" fill="#dd3a45" stroke="#a52831" stroke-width="1"/></g>
<!-- structure -->
<rect x="1693.5" y="513.8" width="63" height="10.3" fill="url(#gBase)" stroke="#787878" stroke-width="1.6"/>
<path d="M1693.5 494.8 L1701 509.6 L1709.2 494.8 L1717 509.6 L1724.8 494.8 L1733 509.6 L1740.8 494.8 L1748.6 509.6 L1756.4 494.8 V513.8 H1693.5 Z" fill="#cbe9f6" stroke="#35647e" stroke-width="1.6" stroke-linejoin="miter"/>
<path d="M1724.8 487.8 L1732.6 477.6 H1728.6 V467.3 H1721 V477.6 H1717 Z" fill="#dd3a45" stroke="#a52831" stroke-width="1"/>
<!-- smoothen -->
<rect x="1810" y="513.4" width="62.3" height="10.6" fill="url(#gBase)" stroke="#787878" stroke-width="1.6"/>
<path d="M1810 494.1 L1816.8 509.7 L1824.8 494.7 L1832.9 509.7 L1842 493.6 H1872.3 V513.4 H1810 Z" fill="#c6e6f6" stroke="#35647e" stroke-width="1.6" stroke-linejoin="miter"/>
<path d="M1851.5 489.3 L1863 466.5 q0.6-1 2-1 H1871 q1.8 0 1 1.6 L1860 488.3 q-0.6 1 -2 1 Z" fill="#f2f2ea" stroke="#2d6b35" stroke-width="1.6"/>
<path d="M1851.9 488.6 L1857.6 477.5 H1866.8 L1860.4 488.6 q-0.5 0.7 -1.5 0.7 H1852.8 Z" fill="#8fca6c"/>
<path d="M1851.5 489.3 L1863 466.5 q0.6-1 2-1 H1871 q1.8 0 1 1.6 L1860 488.3 q-0.6 1 -2 1 Z" fill="none" stroke="#2d6b35" stroke-width="1.6"/>
<!-- erase -->
<rect x="1926" y="513.4" width="62.3" height="10.6" fill="url(#gBase)" stroke="#787878" stroke-width="1.6"/>
<rect x="1926" y="493.8" width="36" height="19.6" fill="#b3e0f2" stroke="#35647e" stroke-width="1.6"/>
<path d="M1966.5 509.7 L1978 487 q0.6-1 2-1 H1987 q1.8 0 1 1.6 L1976 508.7 q-0.6 1 -2 1 Z" fill="#f2ece8"/>
<path d="M1967 509 L1972.8 497.4 H1982.5 L1976.2 508.7 q-0.5 1 -1.5 1 H1967.8 Z" fill="#e23a46"/>
<path d="M1966.5 509.7 L1978 487 q0.6-1 2-1 H1987 q1.8 0 1 1.6 L1976 508.7 q-0.6 1 -2 1 Z" fill="none" stroke="#8a2a32" stroke-width="1.6"/>

<!-- ===== tools row ===== -->
<!-- color -->
<rect x="1468" y="624" width="50.5" height="50.3" rx="3" fill="#e9e9e9" stroke="#6a6a6a" stroke-width="2"/>
<path d="M1495 648 L1522.2 672.7 L1517 677.6 L1490.5 652.5 Z" fill="#c9e8f6" stroke="#2f5668" stroke-width="1.6"/>
<path d="M1496.6 629.8 L1496.2 640.5 L1505.6 644.7 L1494.5 648.5 L1490.7 659.2 L1487.8 650 L1475.5 650.2 L1483.4 643.3 L1479.3 631.5 L1489 636.7 Z" fill="#c9e8f6" stroke="#2f5668" stroke-width="1.6" stroke-linejoin="miter"/>
<!-- polygon -->
<path d="M1580.4 618 L1604 639.8 L1633.4 630.1 L1622.7 657.1 L1588.7 671.7 Z" fill="none" stroke="#6a6a6a" stroke-width="2" stroke-dasharray="8.5 6" stroke-dashoffset="-6"/>
<path d="M1622.7 657.1 L1638 678.6" stroke="#6a6a6a" stroke-width="2" stroke-dasharray="6 6" stroke-dashoffset="-7"/>
<path d="M1580.4 618 l5.5 4 l-4.5 2 Z" fill="#6a6a6a" stroke="#6a6a6a" stroke-width="1"/>
<path d="M1624.5 653.5 L1625 661 L1631 659.5 M1628 657 L1631 659.5" fill="none" stroke="#6a6a6a" stroke-width="1.8"/>
<!-- rectangle -->
<rect x="1702" y="625.5" width="46.3" height="46.5" fill="none" stroke="#6e6e6e" stroke-width="2" stroke-dasharray="6.5 5"/>
<!-- ellipse -->
<circle cx="1841" cy="648.5" r="24" fill="none" stroke="#6e6e6e" stroke-width="2" stroke-dasharray="6.5 5"/>
<!-- move -->
<path d="M1956.8 617.1 L1966.3999999999999 628.6 H1960.3 V668.1999999999999 H1966.3999999999999 L1956.8 679.6999999999999 L1947.2 668.1999999999999 H1953.3 V628.6 H1947.2 Z" fill="#dd3a47" stroke="#a0252f" stroke-width="1.2"/>
<path d="M1925.3 648.4 L1937.0 638.8 V644.9 H1976.6 V638.8 L1988.1 648.4 L1976.6 658.0 V651.9 H1937.0 V658.0 Z" fill="#dd3a47" stroke="#a0252f" stroke-width="1.2"/>
<rect x="1943.8" y="635.6" width="24.6" height="24.4" rx="3.5" fill="#e6e6e6" stroke="#757575" stroke-width="1.8"/>

<!-- ===== display modes ===== -->
<g id="brick">
<rect x="60" y="948" width="50.5" height="50.5" rx="3.5" fill="#d48e7b" stroke="#8a7470" stroke-width="2"/>
<g stroke="#f6c9b3" stroke-width="1.8">
<path d="M61 961.2 H109.5 M61 975.3 H109.5 M61 989.2 H109.5"/>
<path d="M69.9 949 V961 M87.8 949 V961 M106 949 V961"/>
<path d="M63.7 962 V975 M82 962 V975 M100 962 V975"/>
<path d="M69.9 976 V989 M87.8 976 V989 M106 976 V989"/>
<path d="M63.7 990 V997.5 M82 990 V997.5 M100 990 V997.5"/>
</g>
</g>
<!-- lit surface -->
<rect x="176" y="948" width="50.5" height="50.5" rx="3.5" fill="#b9b9b9" stroke="#777" stroke-width="2"/>
<path d="M194 962 L182 997.5 H221 L208 962 Z" fill="#e2e2e2"/>
<g stroke="#eeeeee" stroke-width="1.8" opacity="0.9">
<path d="M177 961.2 H225.5 M177 975.3 H225.5 M177 989.2 H225.5"/>
<path d="M183.7 962 V975 M202 962 V975 M220 962 V975"/>
<path d="M189.9 976 V989 M207.8 976 V989"/>
<path d="M183.7 990 V997.5 M202 990 V997.5 M220 990 V997.5"/>
</g>
<path d="M192.6 941.5 H209.3 L220.8 960 H181.5 Z" fill="#2a9e50" stroke="#0c3d1c" stroke-width="2" stroke-linejoin="round"/>
<path d="M193.6 960.5 a7.3 7.3 0 0 0 14.6 0 Z" fill="#f2ee74" stroke="#9c8a2c" stroke-width="1.3"/>
<!-- lit texture -->
<rect x="294" y="949.5" width="50.5" height="50.5" rx="3.5" fill="#d49282" stroke="#8a7470" stroke-width="2"/>
<path d="M313 964 L300 999 H338 L324 964 Z" fill="#f0d2c8"/>
<g stroke="#f6cdbd" stroke-width="1.8">
<path d="M295 963 H343.5 M295 977 H343.5 M295 991 H343.5"/>
<path d="M301.7 964 V977 M320 964 V977 M338 964 V977"/>
<path d="M307.9 978 V991 M325.8 978 V991"/>
<path d="M301.7 992 V999 M320 992 V999 M338 992 V999"/>
</g>
<path d="M310.6 943.5 H327.7 L338.8 961.9 H299.4 Z" fill="#2a9e50" stroke="#0c3d1c" stroke-width="2" stroke-linejoin="round"/>
<path d="M311.3 962.3 a7.4 7.4 0 0 0 14.8 0 Z" fill="#f2ee74" stroke="#9c8a2c" stroke-width="1.3"/>
<!-- normal map -->
<rect x="407.5" y="947.5" width="51" height="51" rx="3.5" fill="#7c7cf2" stroke="#7a6aa0" stroke-width="2"/>
<g fill="#b9d6f2"><rect x="409" y="955.5" width="48" height="2"/><rect x="409" y="969.4" width="48" height="2"/><rect x="409" y="983.3" width="48" height="2"/></g>
<g fill="#6fb49a" opacity="0.85"><rect x="409" y="957" width="2.5" height="11"/><rect x="428" y="957" width="2" height="11"/><rect x="446" y="957" width="2" height="11"/>
<rect x="418" y="971" width="2" height="11"/><rect x="437" y="971" width="2" height="11"/><rect x="455" y="971" width="2" height="11"/>
<rect x="409" y="985" width="2.5" height="10"/><rect x="428" y="985" width="2" height="10"/><rect x="446" y="985" width="2" height="10"/></g>
<g fill="#3a1a78"><rect x="409" y="952.5" width="48" height="3"/><rect x="409" y="966.4" width="48" height="3"/><rect x="409" y="980.3" width="48" height="3"/><rect x="409" y="994.3" width="48" height="3"/></g>
</svg>

</body></html>
